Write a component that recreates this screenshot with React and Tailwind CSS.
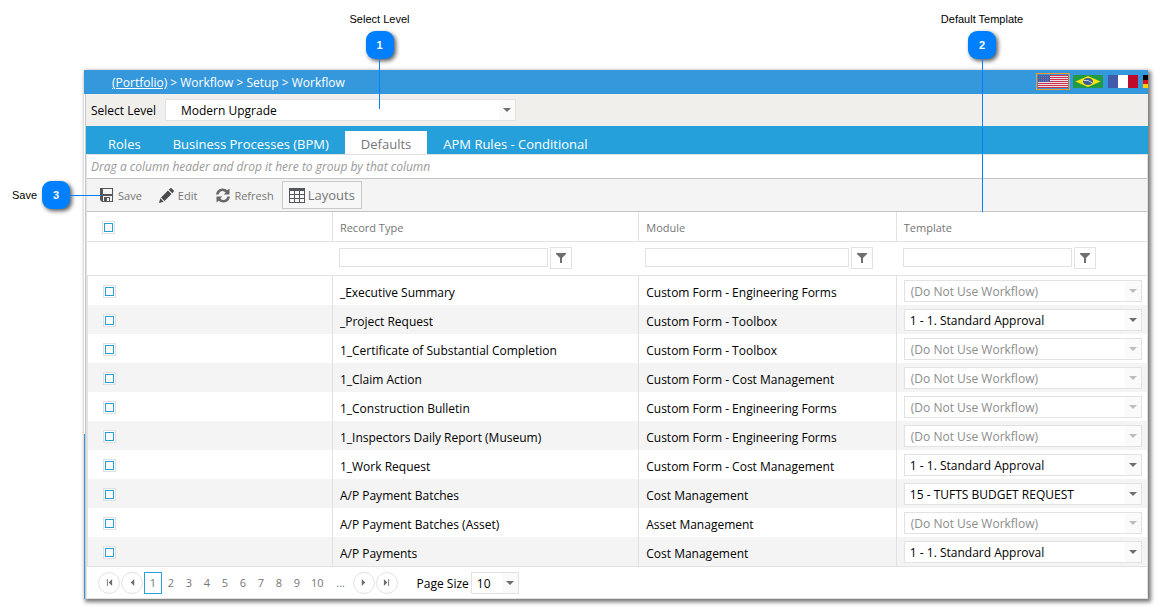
import { useState } from "react";

const rows = [
  ["_Executive Summary", "Custom Form - Engineering Forms", ""],
  ["_Project Request", "Custom Form - Toolbox", "1 - 1. Standard Approval"],
  ["1_Certificate of Substantial Completion", "Custom Form - Toolbox", ""],
  ["1_Claim Action", "Custom Form - Cost Management", ""],
  ["1_Construction Bulletin", "Custom Form - Engineering Forms", ""],
  ["1_Inspectors Daily Report (Museum)", "Custom Form - Engineering Forms", ""],
  ["1_Work Request", "Custom Form - Cost Management", "1 - 1. Standard Approval"],
  ["A/P Payment Batches", "Cost Management", "15 - TUFTS BUDGET REQUEST"],
  ["A/P Payment Batches (Asset)", "Asset Management", ""],
  ["A/P Payments", "Cost Management", "1 - 1. Standard Approval"],
];

const tabs = [
  "Roles",
  "Business Processes (BPM)",
  "Defaults",
  "APM Rules - Conditional",
];

const pages = [1, 2, 3, 4, 5, 6, 7, 8, 9, 10];

function Check({ label }) {
  return (
    <input
      type="checkbox"
      aria-label={label}
      className="block size-[13px] appearance-none border border-[#e0e0e0] bg-white shadow-[inset_0_0_0_1px_#fff,inset_0_0_0_2px_#25a0da] checked:bg-[#25a0da]"
    />
  );
}

function Dropdown({ id, label, value, disabled, className, textClass }) {
  return (
    <div className={`relative h-[22px] ${className}`}>
      <select
        id={id}
        aria-label={label}
        disabled={disabled}
        defaultValue={value}
        className={`block h-full w-full appearance-none border border-[#e2e2e2] bg-white pr-5 pt-0.5 text-xs ${textClass}`}
      >
        <option>{value}</option>
      </select>
      <span className="pointer-events-none absolute inset-y-px right-px flex w-4 items-center justify-center bg-[#fafafa]">
        <svg
          width="8"
          height="4"
          viewBox="0 0 8 4"
          className={disabled ? "fill-[#bdbdbd]" : "fill-[#6e6e6e]"}
        >
          <path d="M0 0h8L4 4z" />
        </svg>
      </span>
    </div>
  );
}

function Filter({ label, className }) {
  return (
    <div className="flex items-center gap-0.5 px-1.5 pb-0.5">
      <input
        type="text"
        aria-label={`Filter ${label}`}
        className={`h-[19px] border border-[#e2e2e2] bg-white px-1 text-xs ${className}`}
      />
      <button
        type="button"
        aria-label={`${label} filter options`}
        className="flex size-[22px] shrink-0 items-center justify-center border border-[#e2e2e2]"
      >
        <svg width="10" height="10" viewBox="0 0 10 10" className="fill-[#6e6e6e]">
          <path d="M0 0h10v1L6 5v5H4V5L0 1z" />
        </svg>
      </button>
    </div>
  );
}

function PagerArrow({ label, d }) {
  return (
    <button
      type="button"
      aria-label={label}
      className="mr-px flex size-[22px] shrink-0 items-center justify-center rounded-full border border-[#e2e2e2]"
    >
      <svg width="7" height="7" viewBox="0 0 8 8" className="fill-[#6e6e6e]">
        <path d={d} />
      </svg>
    </button>
  );
}

function Flag({ label, active, children }) {
  return (
    <button
      type="button"
      aria-label={label}
      className={`h-[17px] w-[34px] shrink-0 border p-px ${
        active ? "border-[#f39a2d]" : "border-transparent"
      }`}
    >
      <svg width="30" height="13" viewBox="0 0 30 13" className="block">
        {children}
      </svg>
    </button>
  );
}

function Badge({ children }) {
  return (
    <span className="flex size-7 shrink-0 items-center justify-center rounded-[9px] bg-[#0080ff] text-[11px] font-bold text-white shadow-[2px_2px_4px_rgba(0,0,0,0.65)]">
      {children}
    </span>
  );
}

function Callout({ number, label, className, lineClass }) {
  return (
    <div
      className={`pointer-events-none absolute flex flex-col items-center font-['Liberation_Sans',sans-serif] ${className}`}
    >
      <span className="mb-1 whitespace-nowrap text-[11px] leading-4 text-black">
        {label}
      </span>
      <Badge>{number}</Badge>
      <span className={`w-px bg-[#0080ff] ${lineClass}`} />
    </div>
  );
}

export default function App() {
  const [tab, setTab] = useState("Defaults");

  return (
    <div className="relative min-h-screen bg-white pb-[9px] pl-[84px] pr-[9px] pt-[70px] font-['Open_Sans','Noto_Sans',sans-serif] text-xs text-black">
      <div className="relative bg-white shadow-[2px_2px_4px_1px_#777]">
        <header className="flex h-6 items-end justify-between bg-[#3598dc] pl-7 text-white">
          <nav className="flex h-full items-center gap-[3px] whitespace-nowrap pt-0.5">
            <a href="#portfolio" className="underline">
              (Portfolio)
            </a>
            <span>&gt; Workflow &gt; Setup &gt; Workflow</span>
          </nav>
          <div className="flex w-28 shrink-0 gap-px overflow-hidden pb-1">
            <Flag label="English" active>
              <path fill="#f0dfe2" d="M0 0h30v13H0z" />
              <path
                stroke="#c8324f"
                d="M0 .5h30M0 2.5h30M0 4.5h30M0 6.5h30M0 8.5h30M0 10.5h30M0 12.5h30"
              />
              <path fill="#4a5fa5" d="M0 0h12v7H0z" />
              <path
                stroke="#6273b0"
                strokeDasharray="1 1"
                d="M1 1.5h10M1 3.5h10M1 5.5h10"
              />
            </Flag>
            <Flag label="Português">
              <path fill="#229a45" d="M0 0h30v13H0z" />
              <path fill="#f8e509" d="M15 1l12.500 5.500L15 12 2.500 6.500z" />
              <ellipse cx="15" cy="6.500" rx="5" ry="3.500" fill="#3b5998" />
              <path stroke="#c9d6dd" fill="none" d="M10.500 5.500q5-1 9 2.500" />
            </Flag>
            <Flag label="Français">
              <path fill="#3f5ba9" d="M0 0h10v13H0z" />
              <path fill="#fff" d="M10 0h10v13H10z" />
              <path fill="#c00a2c" d="M20 0h10v13H20z" />
            </Flag>
            <Flag label="Deutsch">
              <path fill="#000" d="M0 0h30v5H0z" />
              <path fill="#e01010" d="M0 5h30v4H0z" />
              <path fill="#ffce00" d="M0 9h30v4H0z" />
            </Flag>
          </div>
        </header>

        <div className="ml-px border-l border-[#c6c6cc]">
          <div className="flex h-8 items-center gap-[9px] bg-[#f0efeb] pl-[5px]">
            <label htmlFor="level" className="whitespace-nowrap pt-0.5">
              Select Level
            </label>
            <Dropdown
              id="level"
              value="Modern Upgrade"
              className="w-[351px]"
              textClass="pl-[15px]"
            />
          </div>

          <div
            role="tablist"
            className="flex h-7 items-end bg-[#25a0da] pl-1.5 text-[13px]"
          >
            {tabs.map((t) => (
              <button
                key={t}
                type="button"
                role="tab"
                aria-selected={t === tab}
                onClick={() => setTab(t)}
                className={`h-[23px] whitespace-nowrap px-4 pt-px leading-6 ${
                  t === tab ? "bg-white text-[#767676]" : "text-white"
                }`}
              >
                {t}
              </button>
            ))}
          </div>

          <div className="border-x border-t border-[#e2e2e2]">
            <p className="h-6 border-b border-[#c3c3c8] pl-1 italic leading-6 text-[#999]">
              Drag a column header and drop it here to group by that column
            </p>

            <div className="flex h-[33px] items-center border-b border-[#c3c3c8] bg-[#f4f4f4] pl-[13px] text-[11px] text-[#767676]">
              <button type="button" className="mr-[17px] flex items-center gap-[5px]">
                <svg width="13" height="14" viewBox="0 0 13 14" className="fill-[#55565a]">
                  <path
                    fillRule="evenodd"
                    d="M0 0h13v14H2L0 12zM3 1v5h9V1zM3 8v5h1V9h6v4h2V8zM7 10v3h2v-3z"
                  />
                </svg>
                <span className="pt-0.5">Save</span>
              </button>
              <button type="button" className="mr-[19px] flex items-center gap-1">
                <svg width="15" height="15" viewBox="0 0 15 15" className="fill-[#4a4b4f]">
                  <path d="M0 15l1.300-4.700 3.400 3.400zM2 9.500L9 2.500l3.500 3.500-7 7zM9.800 1.700L11.200.3q.7-.6 1.400 0l2.100 2.100q.6.700 0 1.400l-1.400 1.400z" />
                </svg>
                <span className="pt-0.5">Edit</span>
              </button>
              <button type="button" className="mr-2 flex items-center gap-1">
                <svg width="14" height="15" viewBox="0 0 14 15" className="fill-[#66676b]">
                  <path d="M0 6.500Q.7 1 6.500.5q3 0 4.800 1.800L13.500.5v6H7.800l1.900-2Q8.300 3 6.500 3 3.500 3.200 2.600 6.500zM14 8.500q-.7 5.500-6.500 6-3 0-4.800-1.800L.5 14.500v-6h5.700l-1.900 2q1.400 1.500 3.200 1.500 3-.2 3.900-3.500z" />
                </svg>
                <span className="pt-0.5">Refresh</span>
              </button>
              <button
                type="button"
                className="flex h-7 items-center gap-[3px] border border-[#c9c9c9] bg-[#f7f7f7] px-1.5 text-[13px]"
              >
                <svg width="16" height="15" viewBox="0 0 16 15" className="fill-[#55565a]">
                  <path
                    fillRule="evenodd"
                    d="M0 0h16v15H0zM1 3v3h4V3zM6 3v3h4V3zM11 3v3h4V3zM1 7v3h4V7zM6 7v3h4V7zM11 7v3h4V7zM1 11v3h4v-3zM6 11v3h4v-3zM11 11v3h4v-3z"
                  />
                </svg>
                <span className="pt-0.5">Layouts</span>
              </button>
            </div>

            <table className="w-full table-fixed border-separate border-spacing-0">
              <colgroup>
                <col className="w-[23.2%]" />
                <col className="w-[28.9%]" />
                <col className="w-[24.3%]" />
                <col />
              </colgroup>
              <thead className="text-left text-[11px] text-[#767676]">
                <tr className="h-[30px] *:border-b *:border-[#e2e2e2] *:p-0 *:font-normal">
                  <th className="border-r">
                    <div className="pl-[15px] pt-0.5">
                      <Check label="Select all" />
                    </div>
                  </th>
                  <th className="border-r">
                    <div className="pl-[7px] pt-1">Record Type</div>
                  </th>
                  <th className="border-r">
                    <div className="pl-[7px] pt-1">Module</div>
                  </th>
                  <th>
                    <div className="pl-[7px] pt-1">Template</div>
                  </th>
                </tr>
                <tr className="h-[34px] *:border-b *:border-[#e2e2e2] *:p-0">
                  <td />
                  <td>
                    <Filter label="Record Type" className="w-[71%]" />
                  </td>
                  <td>
                    <Filter label="Module" className="w-[83%]" />
                  </td>
                  <td>
                    <Filter label="Template" className="w-[71%]" />
                  </td>
                </tr>
              </thead>
              <tbody>
                {rows.map(([type, module, template]) => (
                  <tr
                    key={type}
                    className="h-[29px] even:bg-[#f4f4f4] *:border-[#e2e2e2] *:p-0"
                  >
                    <td className="border-x">
                      <div className="pl-[15px] pt-0.5">
                        <Check label={`Select ${type}`} />
                      </div>
                    </td>
                    <td className="border-r">
                      <div className="truncate pl-[7px] pt-1">{type}</div>
                    </td>
                    <td className="border-r">
                      <div className="truncate pl-[7px] pt-1">{module}</div>
                    </td>
                    <td>
                      <Dropdown
                        label={`Template for ${type}`}
                        value={template || "(Do Not Use Workflow)"}
                        disabled={!template}
                        className="ml-[7px] mr-[5px]"
                        textClass={
                          template ? "pl-[5px] text-black" : "pl-1.5 text-[#8c8c8c]"
                        }
                      />
                    </td>
                  </tr>
                ))}
              </tbody>
            </table>

            <div className="flex h-[33px] items-center border-y border-[#e2e2e2] pl-[11px] text-[11px] text-[#767676]">
              <PagerArrow label="First page" d="M1 0h1v8H1zM7 0v8L3 4z" />
              <PagerArrow label="Previous page" d="M6 0v8L2 4z" />
              {pages.map((p) => (
                <button
                  key={p}
                  type="button"
                  className={`h-[22px] min-w-[18px] shrink-0 border px-1 pt-0.5 ${
                    p === 1 ? "border-[#25a0da]" : "border-transparent"
                  }`}
                >
                  {p}
                </button>
              ))}
              <button type="button" className="mx-1 w-4 pt-0.5">
                ...
              </button>
              <PagerArrow label="Next page" d="M2 0v8l4-4z" />
              <PagerArrow label="Last page" d="M1 0v8l4-4zM6 0h1v8H6z" />
              <label
                htmlFor="page-size"
                className="ml-[18px] mr-0.5 whitespace-nowrap pt-0.5 text-xs text-black"
              >
                Page Size
              </label>
              <Dropdown
                id="page-size"
                value="10"
                className="w-12"
                textClass="pl-[5px] text-black"
              />
            </div>
          </div>
        </div>
        <span className="absolute bottom-0 left-0 h-[165px] w-px bg-[#3598dc]" />
      </div>

      <Callout
        number="1"
        label="Select Level"
        className="left-[350px] top-[11px] w-[59px]"
        lineClass="h-[50px]"
      />
      <Callout
        number="2"
        label="Default Template"
        className="right-[135px] top-[11px] w-20"
        lineClass="h-[153px]"
      />
      <div className="pointer-events-none absolute left-3 top-[181px] flex items-center font-['Liberation_Sans',sans-serif] text-[11px]">
        <span className="w-[30px]">Save</span>
        <Badge>3</Badge>
        <span className="h-px w-[31px] bg-[#0080ff]" />
      </div>
    </div>
  );
}
